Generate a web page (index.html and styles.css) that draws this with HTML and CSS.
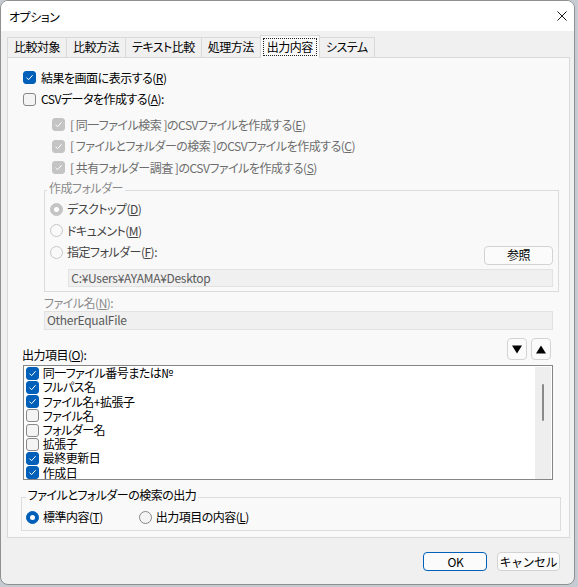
FILE: index.html
```html
<!DOCTYPE html>
<html lang="ja">
<head>
<meta charset="utf-8">
<title>オプション</title>
<link rel="stylesheet" href="styles.css">
</head>
<body>
<div class="window">
  <div class="titlebar">
    <span class="title">オプション</span>
    <span class="close"><svg width="10" height="10" viewBox="0 0 10 10"><path d="M0.5 0.5L9.5 9.5M9.5 0.5L0.5 9.5" stroke="#1a1a1a" stroke-width="1" fill="none"/></svg></span>
  </div>
  <div class="tabs">
    <div class="tab">比較対象</div>
    <div class="tab">比較方法</div>
    <div class="tab">テキスト比較</div>
    <div class="tab">処理方法</div>
    <div class="tab active"><span class="focus">出力内容</span></div>
    <div class="tab">システム</div>
  </div>
  <div class="panel">
    <div class="main-opts">
      <div class="row"><span class="cb on"><svg width="11" height="11" viewBox="0 0 11 11"><path d="M2.5 5.6L4.6 7.7L8.6 3.2" fill="none" stroke="#fff" stroke-width="1"/></svg></span><span>結果を画面に表示する(<u>R</u>)</span></div>
      <div class="row"><span class="cb"></span><span>CSVデータを作成する(<u>A</u>):</span></div>
    </div>
    <div class="sub-opts">
      <div class="row dis"><span class="cb dis-on"><svg width="11" height="11" viewBox="0 0 11 11"><path d="M2.5 5.6L4.6 7.7L8.6 3.2" fill="none" stroke="#fff" stroke-width="1"/></svg></span><span>[ 同一ファイル検索 ]のCSVファイルを作成する(<u>E</u>)</span></div>
      <div class="row dis"><span class="cb dis-on"><svg width="11" height="11" viewBox="0 0 11 11"><path d="M2.5 5.6L4.6 7.7L8.6 3.2" fill="none" stroke="#fff" stroke-width="1"/></svg></span><span>[ ファイルとフォルダーの検索 ]のCSVファイルを作成する(<u>C</u>)</span></div>
      <div class="row dis"><span class="cb dis-on"><svg width="11" height="11" viewBox="0 0 11 11"><path d="M2.5 5.6L4.6 7.7L8.6 3.2" fill="none" stroke="#fff" stroke-width="1"/></svg></span><span>[ 共有フォルダー調査 ]のCSVファイルを作成する(<u>S</u>)</span></div>
    </div>
    <div class="group folder-group">
      <span class="legend dis-text">作成フォルダー</span>
      <div class="row rrow"><span class="rd dis-on"></span><span>デスクトップ(<u>D</u>)</span></div>
      <div class="row rrow"><span class="rd dis"></span><span>ドキュメント(<u>M</u>)</span></div>
      <div class="row-split">
        <div class="row rrow"><span class="rd dis"></span><span>指定フォルダー(<u>F</u>):</span></div>
        <button class="btn browse">参照</button>
      </div>
      <div class="field path-field">C:¥Users¥AYAMA¥Desktop</div>
    </div>
    <div class="fname-label dis-text">ファイル名(<u>N</u>):</div>
    <div class="field fname-field">OtherEqualFile</div>
    <div class="items-head">
      <span class="items-label">出力項目(<u>O</u>):</span>
      <div class="arrows">
        <button class="btn arrow"><svg width="10" height="9" viewBox="0 0 10 9"><path d="M0 0.5H10L5 8.5Z" fill="#000"/></svg></button>
        <button class="btn arrow"><svg width="10" height="9" viewBox="0 0 10 9"><path d="M0 8.5H10L5 0.5Z" fill="#000"/></svg></button>
      </div>
    </div>
    <div class="listbox">
      <div class="list-items">
        <div class="item"><span class="cb on"><svg width="11" height="11" viewBox="0 0 11 11"><path d="M2.5 5.6L4.6 7.7L8.6 3.2" fill="none" stroke="#fff" stroke-width="1"/></svg></span><span>同一ファイル番号または№</span></div>
        <div class="item"><span class="cb on"><svg width="11" height="11" viewBox="0 0 11 11"><path d="M2.5 5.6L4.6 7.7L8.6 3.2" fill="none" stroke="#fff" stroke-width="1"/></svg></span><span>フルパス名</span></div>
        <div class="item"><span class="cb on"><svg width="11" height="11" viewBox="0 0 11 11"><path d="M2.5 5.6L4.6 7.7L8.6 3.2" fill="none" stroke="#fff" stroke-width="1"/></svg></span><span>ファイル名+拡張子</span></div>
        <div class="item"><span class="cb"></span><span>ファイル名</span></div>
        <div class="item"><span class="cb"></span><span>フォルダー名</span></div>
        <div class="item"><span class="cb"></span><span>拡張子</span></div>
        <div class="item"><span class="cb on"><svg width="11" height="11" viewBox="0 0 11 11"><path d="M2.5 5.6L4.6 7.7L8.6 3.2" fill="none" stroke="#fff" stroke-width="1"/></svg></span><span>最終更新日</span></div>
        <div class="item"><span class="cb on"><svg width="11" height="11" viewBox="0 0 11 11"><path d="M2.5 5.6L4.6 7.7L8.6 3.2" fill="none" stroke="#fff" stroke-width="1"/></svg></span><span>作成日</span></div>
      </div>
      <div class="scrollbar"><span class="thumb"></span></div>
    </div>
    <div class="group out-group">
      <span class="legend">ファイルとフォルダーの検索の出力</span>
      <div class="radio-line">
        <div class="row rrow std"><span class="rd on"></span><span>標準内容(<u>T</u>)</span></div>
        <div class="row rrow"><span class="rd"></span><span>出力項目の内容(<u>L</u>)</span></div>
      </div>
    </div>
  </div>
  <div class="footer">
    <button class="btn dlg default">OK</button>
    <button class="btn dlg">キャンセル</button>
  </div>
</div>
</body>
</html>
```

FILE: styles.css
```css
* { box-sizing: border-box; }
html, body { margin: 0; padding: 0; }
body {
  width: 578px;
  height: 587px;
  background: #c6cbd3;
  font-family: "Noto Sans CJK JP", "Noto Sans", sans-serif;
  font-size: 12px;
  letter-spacing: -0.5px;
  color: #000;
  font-feature-settings: "palt";
  overflow: hidden;
}
u { text-decoration: underline; text-underline-offset: 1px; }

.window {
  width: 575px;
  height: 585px;
  background: #f0f0f0;
  border: 1px solid #909090;
  border-radius: 8px;
  overflow: hidden;
  display: flex;
  flex-direction: column;
}

.titlebar {
  height: 30px;
  flex: none;
  background: #fff;
  display: flex;
  align-items: center;
  justify-content: space-between;
  padding: 0 7px 0 8px;
}
.title { line-height: 16px; margin-top: 1px; }
.close { display: flex; width: 10px; height: 10px; }

.tabs {
  height: 26px;
  flex: none;
  display: flex;
  align-items: flex-end;
  padding-left: 6px;
}
.tab {
  height: 20px;
  line-height: 18px;
  padding: 0 6px;
  border: 1px solid #d9d9d9;
  border-bottom: none;
  margin-right: -1px;
  background: #f0f0f0;
  white-space: nowrap;
}
.tab.active {
  height: 23px;
  margin-bottom: -1px;
  background: #f9f9f9;
  position: relative;
  z-index: 1;
  padding: 2px 2px 0;
  line-height: 16px;
}
.focus {
  display: block;
  border: 1px dotted #222;
  padding: 0 3px;
  line-height: 16px;
}

.panel {
  margin-left: 6px;
  width: 563px;
  height: 481.3px;
  flex: none;
  border: 1px solid #d9d9d9;
  background: #f9f9f9;
  padding-top: 9px;
}

.row {
  display: flex;
  align-items: center;
  height: 21.5px;
  gap: 5px;
  white-space: nowrap;
  line-height: 16px;
}
.main-opts { padding-left: 15px; }
.sub-opts { padding-left: 44px; margin-top: 4px; }
.dis { color: #6d6d6d; }
.dis-text { color: #8a8a8a; }

.cb {
  width: 13px;
  height: 13px;
  flex: none;
  border-radius: 3px;
  border: 1px solid #878787;
  background: #f4f4f4;
  display: flex;
  align-items: center;
  justify-content: center;
}
.cb.on { background: #005fb8; border-color: #005fb8; }
.cb.dis-on { background: #c4c4c4; border-color: #c4c4c4; }

.rd {
  width: 13px;
  height: 13px;
  flex: none;
  border-radius: 50%;
  border: 1px solid #878787;
  background: #f4f4f4;
  display: flex;
  align-items: center;
  justify-content: center;
}
.rd.dis { border-color: #c6c6c6; background: #f9f9f9; }
.rd.dis-on { border-color: #c4c4c4; background: #c4c4c4; }
.rd.on { border-color: #005fb8; background: #005fb8; }
.rd.on::after, .rd.dis-on::after {
  content: "";
  width: 5px;
  height: 5px;
  border-radius: 50%;
  background: #fff;
}

.group {
  position: relative;
  border: 1px solid #dcdcdc;
}
.legend {
  position: absolute;
  top: -11px;
  left: 2px;
  padding: 0 2px;
  background: #f9f9f9;
  line-height: 16px;
  white-space: nowrap;
}
.folder-group {
  margin: 11px 0 0 36px;
  width: 515px;
  height: 102px;
  padding: 8px 0 0 5px;
}
.folder-group .row { color: #444; }
.rrow { gap: 4px; }
.row-split {
  display: flex;
  justify-content: space-between;
  align-items: flex-start;
  padding-right: 5px;
}
.browse {
  margin-top: 4px;
  width: 69px;
  height: 19px;
}

.field {
  height: 18.5px;
  background: #f0f0f0;
  border: 1px solid #e2e2e2;
  color: #5a5a5a;
  line-height: 16px;
  padding-left: 2px;
  white-space: nowrap;
  letter-spacing: -0.3px;
  font-feature-settings: normal;
}
.path-field { margin: 4px 5px 0 18.3px; }
.fname-label { margin: 3.2px 0 0 36px; height: 16.5px; line-height: 16px; }
.fname-field { margin-left: 36px; width: 508.7px; }

.items-head {
  margin: 8.6px 0 0 14px;
  height: 22px;
  display: flex;
  justify-content: space-between;
  padding-right: 17.7px;
}
.items-label { align-self: flex-end; line-height: 16px; margin-bottom: -3px; }
.arrows { display: flex; gap: 3.4px; }
.arrow {
  width: 20.6px;
  height: 22px;
  display: flex;
  align-items: center;
  justify-content: center;
}

.btn {
  font-family: inherit;
  font-size: 12px;
  letter-spacing: inherit;
  color: #000;
  background: #fbfbfb;
  border: 1px solid #d3d3d3;
  border-radius: 4px;
  padding: 0;
  line-height: 16px;
}

.listbox {
  margin: 4.7px 0 0 15.3px;
  width: 529.4px;
  height: 115.3px;
  border: 1px solid #868686;
  background: #fff;
  display: flex;
  justify-content: space-between;
  padding: 0 1px 0 1.7px;
}
.list-items { padding-top: 0.2px; }
.item {
  height: 14.2px;
  display: flex;
  align-items: center;
  gap: 3.7px;
  line-height: 14px;
  white-space: nowrap;
}
.scrollbar {
  width: 15.7px;
  margin-top: 1px;
  height: 112px;
  background: #eeeeee;
  display: flex;
  justify-content: center;
  padding-top: 17px;
}
.thumb {
  width: 2px;
  height: 37px;
  border-radius: 1px;
  background: #8a8a8a;
}

.out-group {
  margin: 16.4px 0 0 12.7px;
  width: 540.6px;
  height: 34.6px;
  padding: 9px 0 0 4.3px;
}
.out-group .legend { left: 4px; }
.radio-line { display: flex; }
.std { width: 112.7px; }

.footer {
  display: flex;
  justify-content: flex-end;
  gap: 9.4px;
  padding: 14px 14px 0 0;
}
.dlg { height: 18.5px; }
.dlg.default { width: 64px; border-color: #005fb8; }
.dlg:not(.default) { width: 63.3px; }
```
